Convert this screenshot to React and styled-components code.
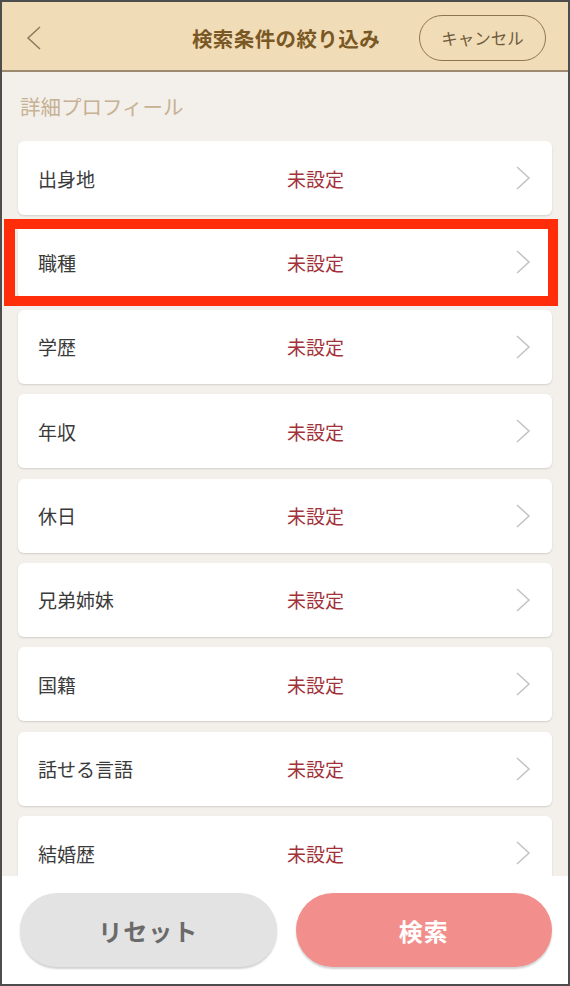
import React from "react";
import styled, { createGlobalStyle } from "styled-components";

const GlobalStyle = createGlobalStyle`
  * { box-sizing: border-box; }
  html, body { margin: 0; padding: 0; background: #ffffff; }
  body {
    font-family: "Noto Sans CJK JP", "Noto Sans", sans-serif;
  }
`;

const Screen = styled.div`
  width: 570px;
  height: 986px;
  border: 2px solid #4d4d4d;
  display: flex;
  flex-direction: column;
  background: #f3efea;
  overflow: hidden;
`;

const Header = styled.header`
  height: 70px;
  flex: none;
  background: #f1dcb8;
  border-bottom: 2px solid #9c8a70;
  display: grid;
  grid-template-columns: 120px 1fr 120px;
  align-items: center;
  padding: 4px 22px 0 24px;
`;

const BackButton = styled.button`
  border: none;
  background: none;
  padding: 0;
  width: 24px;
  height: 28px;
  display: flex;
  align-items: center;
  color: #8b7a5e;
`;

const Title = styled.h1`
  margin: 0;
  text-align: center;
  font-size: 20.5px;
  font-weight: 700;
  color: #7a5824;
  letter-spacing: 0.4px;
  white-space: nowrap;
`;

const CancelButton = styled.button`
  justify-self: end;
  width: 127px;
  height: 46px;
  border-radius: 23px;
  border: 1.5px solid #8d7553;
  background: transparent;
  color: #6e5a3c;
  font-family: inherit;
  font-size: 16.5px;
  padding: 0;
`;

const Content = styled.main`
  flex: 1;
  overflow: hidden;
  padding: 21px 16px 0;
`;

const SectionLabel = styled.h2`
  margin: 0 0 22px 2px;
  font-size: 20.5px;
  line-height: 26px;
  font-weight: 400;
  color: #c7b194;
`;

const List = styled.ul`
  list-style: none;
  margin: 0;
  padding: 0;
  display: flex;
  flex-direction: column;
  gap: 10.4px;
`;

const Card = styled.li`
  position: relative;
  height: 74px;
  flex: none;
  background: #ffffff;
  border-radius: 6px;
  box-shadow: 0 1px 2px rgba(0, 0, 0, 0.14);
  display: grid;
  grid-template-columns: 249px 1fr auto;
  align-items: center;
  padding: 0 21px 0 20px;
`;

const Highlight = styled.span`
  position: absolute;
  left: -14px;
  right: -6px;
  top: -6px;
  bottom: -7px;
  border: 10px solid #ff2d0a;
  border-left-width: 11px;
  pointer-events: none;
`;

const Label = styled.span`
  font-size: 19px;
  color: #3a3a3a;
`;

const Value = styled.span`
  font-size: 19px;
  color: #a2323a;
`;

const Footer = styled.footer`
  flex: none;
  height: 108px;
  background: #ffffff;
  display: grid;
  grid-template-columns: 1fr 1fr;
  gap: 19px;
  align-items: center;
  padding: 0 16px 0 18px;
`;

const ActionButton = styled.button`
  height: 74px;
  border: none;
  border-radius: 37px;
  font-family: inherit;
  font-size: 24px;
  font-weight: 700;
  letter-spacing: 1px;
  color: ${(p) => (p.$primary ? "#ffffff" : "#6a6a6a")};
  background: ${(p) => (p.$primary ? "#f28f8c" : "#e3e3e3")};
  box-shadow: 0 2px 2px rgba(0, 0, 0, 0.18);
`;

const Chevron = ({ color = "#c2c2c2", left }) => (
  <svg width="16" height="26" viewBox="0 0 16 26">
    <polyline
      points={left ? "14,2 2,13 14,24" : "2,2 14,13 2,24"}
      fill="none"
      stroke={color}
      strokeWidth="1.5"
    />
  </svg>
);

const items = [
  "出身地",
  "職種",
  "学歴",
  "年収",
  "休日",
  "兄弟姉妹",
  "国籍",
  "話せる言語",
  "結婚歴",
];

export default function App() {
  return (
    <>
      <GlobalStyle />
      <Screen>
        <Header>
          <BackButton>
            <Chevron left color="#8b7a5e" />
          </BackButton>
          <Title>検索条件の絞り込み</Title>
          <CancelButton>キャンセル</CancelButton>
        </Header>
        <Content>
          <SectionLabel>詳細プロフィール</SectionLabel>
          <List>
            {items.map((item) => (
              <Card key={item}>
                <Label>{item}</Label>
                <Value>未設定</Value>
                <Chevron />
                {item === "職種" && <Highlight />}
              </Card>
            ))}
          </List>
        </Content>
        <Footer>
          <ActionButton>リセット</ActionButton>
          <ActionButton $primary>検索</ActionButton>
        </Footer>
      </Screen>
    </>
  );
}
